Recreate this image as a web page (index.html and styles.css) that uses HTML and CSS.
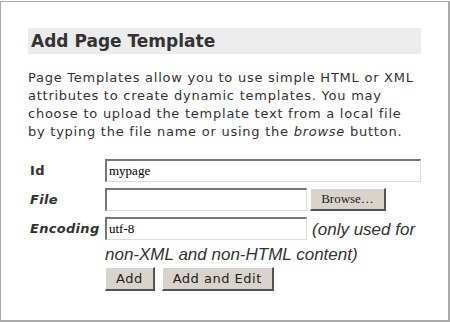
FILE: index.html
```html
<!DOCTYPE html>
<html lang="en">
<head>
    <meta charset="UTF-8">
    <title>Add Page Template</title>
    <link rel="stylesheet" href="styles.css">
</head>
<body>
    <div class="frame">
        <h2 class="title">Add Page Template</h2>
        <p class="intro">
            Page Templates allow you to use simple HTML or XML<br>
            attributes to create dynamic templates. You may<br>
            choose to upload the template text from a local file<br>
            by typing the file name or using the <em>browse</em> button.
        </p>
        <table class="form">
            <tr>
                <th>Id</th>
                <td><input type="text" class="field wide" value="mypage"></td>
            </tr>
            <tr>
                <th><em>File</em></th>
                <td><input type="text" class="field"><button type="button" class="browse">Browse…</button></td>
            </tr>
            <tr>
                <th><em>Encoding</em></th>
                <td class="enc">
                    <input type="text" class="field" value="utf-8">
                    <em class="note">(only used for non-XML and non-HTML content)</em>
                </td>
            </tr>
            <tr>
                <th></th>
                <td>
                    <div class="actions">
                        <button type="submit" class="btn">Add</button>
                        <button type="submit" class="btn">Add and Edit</button>
                    </div>
                </td>
            </tr>
        </table>
    </div>
</body>
</html>
```

FILE: styles.css
```css
body {
    margin: 0;
    padding-top: 1px;
    font-family: "DejaVu Sans", Verdana, sans-serif;
    color: #333;
    background: #fff;
}
.frame {
    box-sizing: border-box;
    width: 450px;
    height: 321px;
    border: 1px solid #aaa;
    border-right-width: 2px;
    border-bottom-width: 2px;
    padding: 26px 27px;
}
.title {
    margin: 0;
    height: 26px;
    line-height: 26px;
    width: 393px;
    padding-left: 3px;
    box-sizing: border-box;
    background: #ececec;
    font-size: 17px;
    font-weight: bold;
}
.intro {
    margin: 15px 0 0;
    font-size: 13px;
    line-height: 18px;
    letter-spacing: 0.75px;
    white-space: nowrap;
}
.form {
    margin-top: 18px;
    border-collapse: collapse;
}
.form th {
    text-align: left;
    vertical-align: top;
    font-size: 13px;
    letter-spacing: 0.3px;
    padding: 4px 0 0 2px;
    width: 75px;
}
.form td {
    padding: 0 0 6px;
    vertical-align: top;
}
.form td.enc {
    padding-bottom: 0;
}
.field {
    box-sizing: border-box;
    width: 202px;
    height: 23px;
    border-style: solid;
    border-color: #777 #ddd #ddd #777;
    border-width: 2px 1px 1px 2px;
    padding: 1px 2px;
    font-family: "Liberation Serif", serif;
    font-size: 13px;
    vertical-align: top;
}
.wide {
    width: 316px;
}
.browse {
    height: 23px;
    width: 76px;
    margin-left: 3px;
    background: #d8d4cc;
    border: 1px solid #fff;
    border-right: 2px solid #555;
    border-bottom: 2px solid #555;
    font-family: "Liberation Serif", serif;
    font-size: 13px;
    color: #222;
    vertical-align: top;
}
.note {
    font-family: "Liberation Sans", Arial, sans-serif;
    font-size: 17px;
    line-height: 25px;
}
.actions {
    display: flex;
    gap: 7px;
}
.btn {
    height: 24px;
    padding: 0 10px;
    background: #d8d4cc;
    border: 1px solid #fff;
    border-right: 2px solid #555;
    border-bottom: 2px solid #555;
    font-family: "DejaVu Sans", Verdana, sans-serif;
    font-size: 13px;
    letter-spacing: 0.5px;
    color: #222;
}
```
